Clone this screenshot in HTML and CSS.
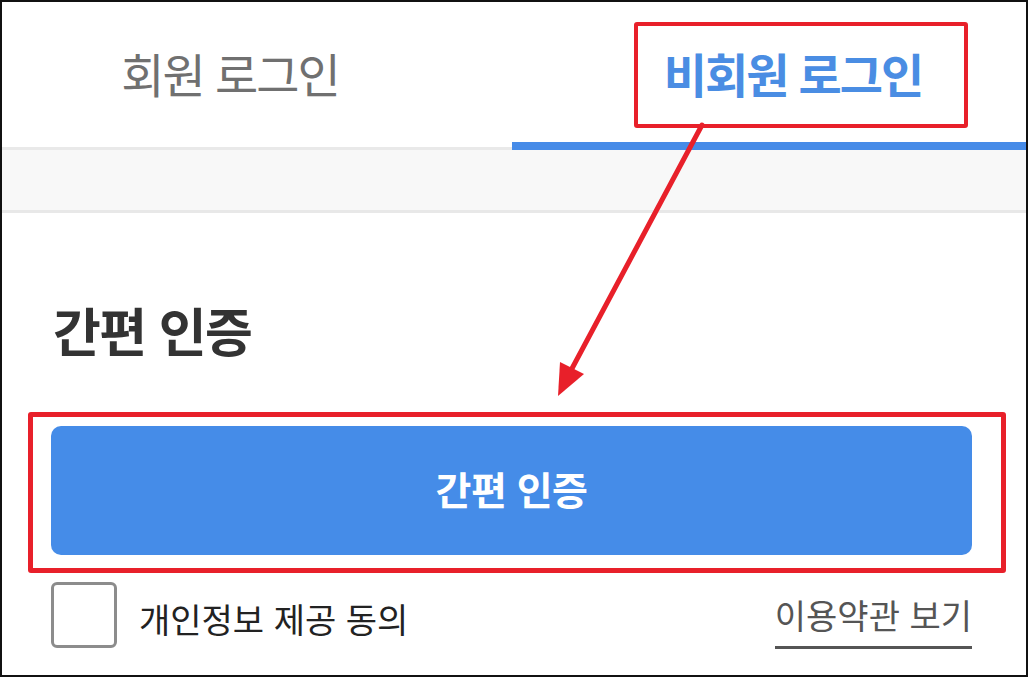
FILE: index.html
```html
<!DOCTYPE html>
<html lang="ko">
<head>
    <meta charset="UTF-8">
    <meta name="viewport" content="width=device-width, initial-scale=1.0">
    <title>비회원 로그인</title>
    <link rel="stylesheet" href="styles.css">
</head>
<body>
    <div class="screen">
        <div class="tabs">
            <div class="tab tab-member">회원 로그인</div>
            <div class="tab tab-guest active">비회원 로그인</div>
        </div>
        <div class="band"></div>

        <div class="content">
            <h2 class="section-title">간편 인증</h2>
            <button class="auth-button">간편 인증</button>
            <div class="agree-row">
                <label class="agree">
                    <span class="checkbox"></span>
                    <span class="agree-text">개인정보 제공 동의</span>
                </label>
                <a class="terms-link" href="#">이용약관 보기</a>
            </div>
        </div>
    </div>

    <!-- annotation marks -->
    <div class="mark mark-tab"></div>
    <div class="mark mark-button"></div>
    <svg class="arrow" width="1028" height="677" viewBox="0 0 1028 677">
        <line x1="702" y1="125" x2="568" y2="376" stroke="#e8202a" stroke-width="5" stroke-linecap="round"/>
        <polygon points="558,396 584,374 560,362" fill="#e8202a"/>
    </svg>
</body>
</html>
```

FILE: styles.css
```css
* {
    box-sizing: border-box;
}
body {
    margin: 0;
    font-family: 'Noto Sans CJK KR', 'Noto Sans', sans-serif;
    background-color: #fff;
}
.screen {
    width: 1028px;
    height: 677px;
    border: 2px solid #111;
    background-color: #fff;
    overflow: hidden;
}
.tabs {
    display: flex;
    height: 148px;
    border-bottom: 3px solid #e9e9e9;
}
.tab {
    display: flex;
    align-items: center;
    justify-content: center;
    font-size: 47px;
    line-height: 1;
    letter-spacing: -2px;
    padding-bottom: 4px;
}
.tab-member {
    flex: 0 0 510px;
    color: #707070;
    padding-right: 54px;
}
.tab-guest {
    flex: 1;
    color: #4a8de3;
    font-weight: 700;
    padding-left: 48px;
}
.tab.active {
    height: 148px;
    border-bottom: 8px solid #468be8;
    padding-top: 4px;
}
.band {
    height: 63px;
    background-color: #f8f8f8;
    border-bottom: 3px solid #e8e8e8;
}
.content {
    padding: 0 54px 0 49px;
}
.section-title {
    margin: 87px 0 0 2px;
    font-size: 52px;
    line-height: 60px;
    letter-spacing: -1.5px;
    font-weight: 700;
    color: #333;
}
.auth-button {
    display: block;
    width: 100%;
    height: 129px;
    margin-top: 66px;
    padding-bottom: 6px;
    border: none;
    border-radius: 10px;
    background-color: #458ce8;
    color: #fff;
    font-family: inherit;
    font-size: 39px;
    letter-spacing: -0.5px;
    font-weight: 700;
    cursor: pointer;
}
.agree-row {
    display: flex;
    align-items: flex-start;
    justify-content: space-between;
    margin-top: 27px;
}
.agree {
    display: flex;
    align-items: center;
    gap: 22px;
}
.checkbox {
    width: 66px;
    height: 66px;
    border: 3px solid #8c8c8c;
    border-radius: 6px;
}
.agree-text {
    font-size: 34px;
    line-height: 40px;
    padding-top: 7px;
    color: #222;
}
.terms-link {
    margin-top: 13px;
    font-size: 34px;
    line-height: 40px;
    color: #555;
    text-decoration: none;
    border-bottom: 3px solid #555;
    padding-bottom: 11px;
}
.mark {
    position: absolute;
    border: 4px solid #e8202a;
    border-radius: 3px;
    pointer-events: none;
}
.mark-tab {
    left: 634px;
    top: 22px;
    width: 334px;
    height: 106px;
}
.mark-button {
    left: 28px;
    top: 412px;
    width: 978px;
    height: 161px;
    border-width: 5px;
}
.arrow {
    position: absolute;
    left: 0;
    top: 0;
    pointer-events: none;
}
```
